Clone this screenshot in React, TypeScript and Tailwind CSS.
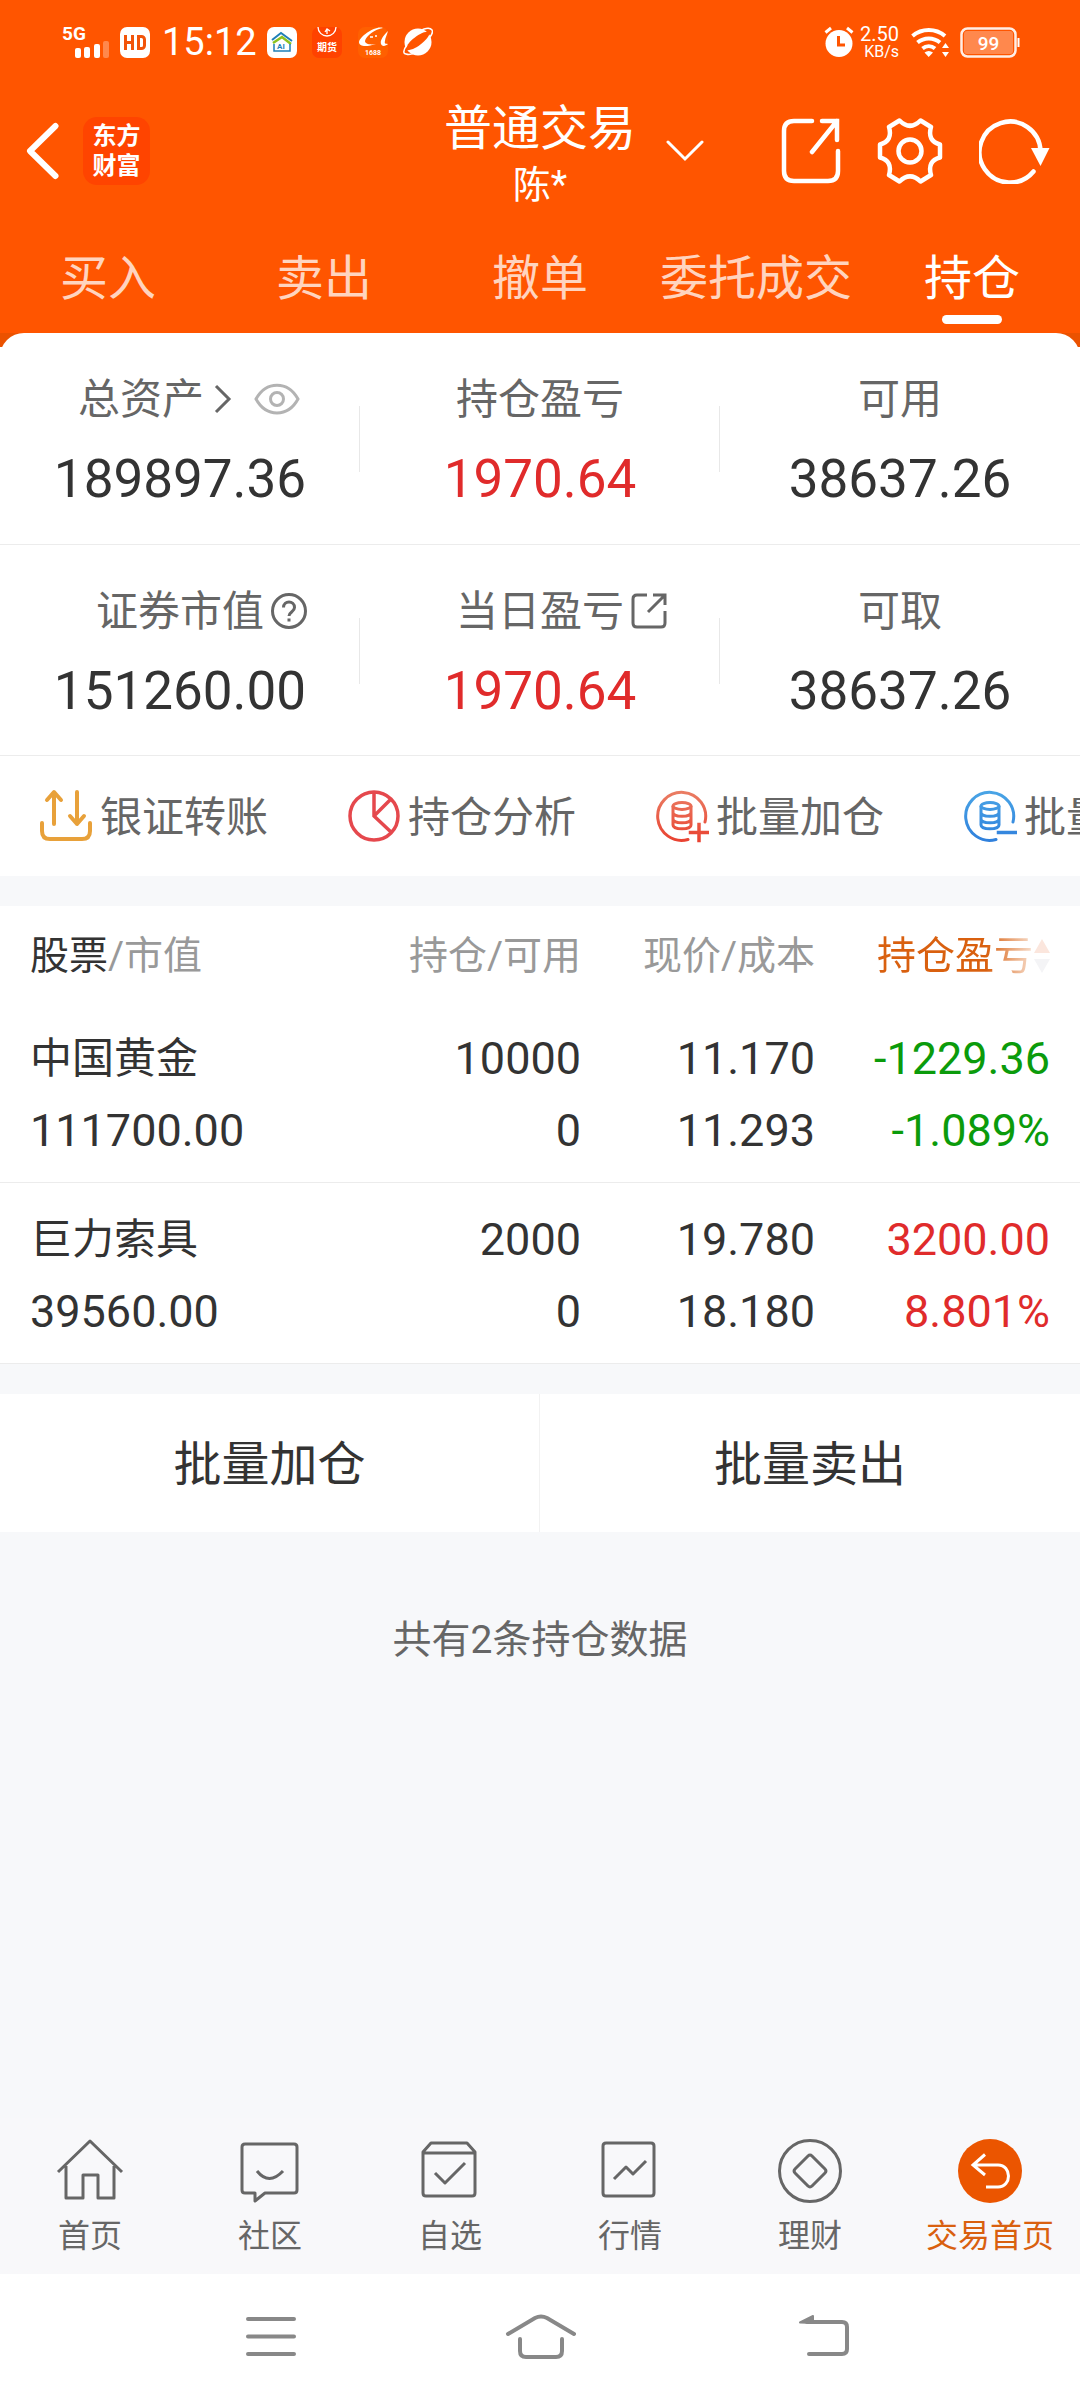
import type { ReactNode } from "react";

type Tone = "default" | "up" | "down";

const toneClass: Record<Tone, string> = {
    default: "text-[#333333]",
    up: "text-[#e02b2b]",
    down: "text-[#0b9b0b]",
};

const tabs = ["买入", "卖出", "撤单", "委托成交", "持仓"];

const holdings: {
    name: string;
    marketValue: string;
    amount: string;
    available: string;
    price: string;
    cost: string;
    profit: string;
    profitRate: string;
    tone: Tone;
}[] = [
    {
        name: "中国黄金",
        marketValue: "111700.00",
        amount: "10000",
        available: "0",
        price: "11.170",
        cost: "11.293",
        profit: "-1229.36",
        profitRate: "-1.089%",
        tone: "down",
    },
    {
        name: "巨力索具",
        marketValue: "39560.00",
        amount: "2000",
        available: "0",
        price: "19.780",
        cost: "18.180",
        profit: "3200.00",
        profitRate: "8.801%",
        tone: "up",
    },
];

export default function App() {
    return (
        <div className="flex min-h-screen flex-col bg-[#f7f8fa] font-['Roboto','Noto_Sans_CJK_SC',sans-serif] text-[#333333]">
            <header className="bg-[#ff5500] text-white">
                <StatusBar />
                <TitleBar />
                <Tabs />
            </header>
            <main className="flex-1">
                <Summary />
                <QuickActions />
                <Holdings />
                <div className="mt-[30px] grid h-[138px] grid-cols-2 divide-x divide-[#f2f2f2] bg-white text-5xl">
                    <button type="button" className="pt-1">批量加仓</button>
                    <button type="button" className="pt-1">批量卖出</button>
                </div>
                <p className="mt-20 text-center text-[39px] leading-[56px] text-[#666666]">共有2条持仓数据</p>
            </main>
            <BottomNav />
            <SystemNav />
        </div>
    );
}

function StatusBar() {
    return (
        <div className="flex h-[84px] items-center justify-between pr-[60px] pl-[62px]">
            <div className="flex items-center">
                <svg width="48" height="44" viewBox="0 0 48 44" fill="#fff">
                    <text x="0" y="20" fontSize="19" fontWeight="700" fontFamily="Roboto">5G</text>
                    <rect x="13" y="28" width="6" height="10" rx="2" />
                    <rect x="22" y="27" width="6" height="11" rx="2" />
                    <rect x="32" y="24" width="6" height="14" rx="2" />
                    <rect x="41" y="21" width="6" height="17" rx="2" opacity=".3" />
                </svg>
                <svg className="ml-[10px]" width="30" height="31" viewBox="0 0 30 31">
                    <rect width="30" height="31" rx="7" fill="#fff" />
                    <path d="M5.500 8v15M12.500 8v15M5.500 15.500h7M18.500 9.500h3a3 3 0 0 1 3 3v6a3 3 0 0 1-3 3h-3z" fill="none" stroke="#f2540a" strokeWidth="3" />
                </svg>
                <span className="ml-3 text-[38px] leading-[44px]">15:12</span>
                <svg className="ml-[10px]" width="30" height="31" viewBox="0 0 30 31">
                    <rect width="30" height="31" rx="7" fill="#fff" />
                    <path d="M5 13 14 6l11 8" fill="none" stroke="#1f7fb8" strokeWidth="2" />
                    <path d="m6 16 9-6 9 7" fill="none" stroke="#8dc21f" strokeWidth="2.500" />
                    <path d="M7 17v7h16v-7" fill="none" stroke="#1f7fb8" strokeWidth="1.500" />
                    <text x="10" y="22" fontSize="8" fontWeight="700" fontFamily="Roboto" fill="#1f7fb8">AI</text>
                </svg>
                <svg className="ml-[15px]" width="30" height="31" viewBox="0 0 30 31">
                    <rect width="30" height="31" rx="7" fill="#ff4200" />
                    <path d="M6 0a9 9 0 0 0 18 0M13 5l2-3 3 2M15 3v4" fill="none" stroke="#fff" strokeWidth="1.300" />
                    <text x="5" y="24" fontSize="10" fontWeight="700" fontFamily="Noto Sans CJK SC" fill="#fff">期货</text>
                </svg>
                <svg className="ml-4" width="30" height="31" viewBox="0 0 30 31">
                    <rect width="30" height="31" rx="7" fill="#ff6000" />
                    <path d="M25 1C18-2 2 9 1 15c0 5 8 5 17 2-6 1-11 0-11-3C8 9 17 2 25 1zM30 4c-6 6-8 10-7 13 1 3 5 2 7 0-2 0-4 0-3-3 0-3 2-6 3-10z" fill="#fff" />
                    <path d="M12 10h3M17 9h2" stroke="#fff" strokeWidth="1.500" />
                    <text x="7" y="28" fontSize="7" fontWeight="700" fontFamily="Roboto" fill="#fff">1688</text>
                </svg>
                <svg className="ml-[15px]" width="30" height="30" viewBox="0 0 30 30">
                    <circle cx="15" cy="15" r="13.500" fill="#fff" />
                    <path d="M3 23C1 18 18 3 26 5c3 5-15 20-23 18z" fill="#ff5500" />
                    <path d="M4 18C0 23 0 27 3 27c3 1 7 0 10-2M16 4c6-3 11-4 13-1 1 2 0 5-3 8" fill="none" stroke="#fff" strokeWidth="1.500" />
                </svg>
            </div>
            <div className="flex items-center">
                <svg width="30" height="32" viewBox="0 0 30 32">
                    <circle cx="15" cy="17.500" r="13.500" fill="#fff" />
                    <path d="M1.500 6.500 7 2M28.500 6.500 23 2" stroke="#fff" strokeWidth="3" />
                    <path d="M14.500 10v9H21" fill="none" stroke="#ff5500" strokeWidth="3" />
                </svg>
                <div className="ml-[6px] text-right">
                    <div className="text-xl leading-5">2.50</div>
                    <div className="text-base leading-4">KB/s</div>
                </div>
                <svg className="ml-3" width="38" height="31" viewBox="0 0 38 31">
                    <g fill="none" stroke="#fff" strokeWidth="4">
                        <path d="M1.500 9a25 25 0 0 1 32.500 0" />
                        <path d="M6.500 15.500a17.500 17.500 0 0 1 22.500 0" />
                        <path d="M11.500 21.500a10 10 0 0 1 12.500 0" />
                    </g>
                    <path d="M13.500 25.500a7 7 0 0 1 8.500 0L17.700 30zM34.500 16l3.500 5h-7zM34.500 30 31 25h7z" fill="#fff" />
                </svg>
                <svg className="ml-[11px]" width="60" height="31" viewBox="0 0 60 31">
                    <rect x="1.500" y="1.500" width="54" height="28" rx="6" fill="none" stroke="#fff" strokeOpacity=".9" strokeWidth="2.500" />
                    <rect x="4" y="4" width="49" height="23" rx="3" fill="#fff" opacity=".3" />
                    <path d="M58.500 11v9" stroke="#fff" strokeWidth="2" />
                    <text x="28.500" y="22.500" textAnchor="middle" fontSize="19" fontWeight="500" fontFamily="Roboto" fill="#fff">99</text>
                </svg>
            </div>
        </div>
    );
}

function TitleBar() {
    return (
        <div className="grid h-[134px] grid-cols-[1fr_auto_1fr] items-center px-[26px]">
            <div className="flex items-center gap-6">
                <button type="button" aria-label="返回">
                    <svg width="33" height="58" viewBox="0 0 33 58" fill="none" stroke="#fff" strokeWidth="6" strokeLinecap="round" strokeLinejoin="round">
                        <path d="M29.500 4 4 29l25.500 25" />
                    </svg>
                </button>
                <div className="flex h-[68px] w-[67px] items-center justify-center rounded-[14px] bg-[#ff4400] text-2xl leading-[30px] font-bold">
                    <span className="w-12">东方财富</span>
                </div>
            </div>
            <div className="flex flex-col items-center pt-2">
                <div className="relative">
                    <h1 className="text-5xl leading-[60px]">普通交易</h1>
                    <button type="button" aria-label="切换账户" className="absolute top-[41px] left-full ml-[30px]">
                        <svg width="38" height="22" viewBox="0 0 38 22" fill="none" stroke="#fff" strokeWidth="3" strokeLinecap="round">
                            <path d="m2 2 17 17L36 2" />
                        </svg>
                    </button>
                </div>
                <span className="text-[38px] leading-[52px]">陈*</span>
            </div>
            <div className="flex items-center justify-end gap-9">
                <button type="button" aria-label="分享">
                    <svg width="60" height="66" viewBox="0 0 60 66" fill="none" stroke="#fff" strokeWidth="4.500" strokeLinecap="round">
                        <path d="M31 3H13Q3 3 3 13v40q0 10 10 10h34q10 0 10-10V33" />
                        <path d="M41 3h15v19M56 3 31 34" />
                    </svg>
                </button>
                <button type="button" aria-label="设置">
                    <svg width="66" height="66" viewBox="0 0 66 66" fill="none" stroke="#fff" strokeWidth="4.500" strokeLinejoin="round">
                        <path d="M22.500 2.500Q33 13 43.500 2.500L54 9Q50 23 63 26.500v13Q50 43 54 57l-10.500 6.500Q33 53 22.500 63.500L12 57Q16 43 3 39.500v-13Q16 23 12 9z" />
                        <circle cx="33" cy="33" r="11.500" />
                    </svg>
                </button>
                <button type="button" aria-label="刷新">
                    <svg width="75" height="66" viewBox="0 0 75 66" fill="none" stroke="#fff" strokeWidth="4.500" strokeLinecap="round">
                        <path d="M54.500 53.500A30.500 30.500 0 1 1 61.500 33" />
                        <path d="M52 30h18.500L61.500 48z" fill="#fff" stroke="none" />
                    </svg>
                </button>
            </div>
        </div>
    );
}

function Tabs() {
    return (
        <nav className="grid h-[115px] grid-cols-5 text-5xl">
            {tabs.map((tab) => {
                const active = tab === "持仓";
                return (
                    <a
                        key={tab}
                        href="#"
                        className={`flex flex-col items-center pt-[29px] leading-[64px] whitespace-nowrap ${active ? "text-white" : "text-white/75"}`}
                    >
                        {tab}
                        {active && <span className="mt-1 h-[9px] w-[60px] rounded-full bg-white" />}
                    </a>
                );
            })}
        </nav>
    );
}

function Stat({ label, value, tone = "default", children }: { label: string; value: string; tone?: Tone; children?: ReactNode }) {
    return (
        <div className="relative flex flex-col items-center pt-[38px] after:absolute after:top-[73px] after:right-0 after:h-[66px] after:w-px after:bg-[#e8e8e8] last:after:hidden">
            <div className="flex h-14 items-center text-[42px] text-[#666666]">
                {label}
                {children}
            </div>
            <div className={`mt-5 text-[53px] leading-[64px] ${toneClass[tone]}`}>{value}</div>
        </div>
    );
}

function Summary() {
    return (
        <div className="bg-[linear-gradient(#eb5200_14px,#ffffff_14px)]">
            <section className="rounded-t-3xl bg-white">
                <div className="grid h-[212px] grid-cols-3 border-b border-[#ececec]">
                    <Stat label="总资产" value="189897.36">
                        <svg className="ml-2" width="20" height="32" viewBox="0 0 20 32" fill="none" stroke="#666" strokeWidth="3">
                            <path d="m4 3 13 13L4 29" />
                        </svg>
                        <button type="button" aria-label="隐藏资产" className="-mr-[18px] ml-[22px]">
                            <svg width="46" height="32" viewBox="0 0 46 32" fill="none" stroke="#b3b3b3" strokeWidth="3">
                                <path d="M2 16C12-2.500 34-2.500 44 16 34 34.500 12 34.500 2 16z" />
                                <circle cx="23" cy="16" r="6.500" />
                            </svg>
                        </button>
                    </Stat>
                    <Stat label="持仓盈亏" value="1970.64" tone="up" />
                    <Stat label="可用" value="38637.26" />
                </div>
                <div className="grid h-[211px] grid-cols-3 border-b border-[#ececec]">
                    <Stat label="证券市值" value="151260.00">
                        <button type="button" aria-label="说明" className="-mr-11 ml-[6px]">
                            <svg width="38" height="38" viewBox="0 0 38 38" fill="none" stroke="#666" strokeWidth="3">
                                <circle cx="19" cy="19" r="16.500" />
                                <path d="M13.500 15.500c0-7.500 11-7.500 11 0 0 4.500-5.500 4.500-5.500 8.500M19 26.500v3" />
                            </svg>
                        </button>
                    </Stat>
                    <Stat label="当日盈亏" value="1970.64" tone="up">
                        <button type="button" aria-label="盈亏详情" className="-mr-11 ml-[6px]">
                            <svg width="38" height="38" viewBox="0 0 38 38" fill="none" stroke="#666" strokeWidth="3">
                                <path d="M17 3H7Q3 3 3 7v24q0 4 4 4h24q4 0 4-4V19M23 3h12v10M35 3 18 20" />
                            </svg>
                        </button>
                    </Stat>
                    <Stat label="可取" value="38637.26" />
                </div>
            </section>
        </div>
    );
}

function QuickActions() {
    const actions = [
        { label: "银证转账", icon: <TransferIcon /> },
        { label: "持仓分析", icon: <PieIcon /> },
        { label: "批量加仓", icon: <CoinsIcon id="coins-add" from="#ea8066" to="#e9402f" plus /> },
        { label: "批量卖出", icon: <CoinsIcon id="coins-sell" from="#4aa6e6" to="#2f7fdc" /> },
    ];

    return (
        <div className="flex h-[120px] gap-[79px] overflow-hidden bg-white pl-[39px]">
            {actions.map((action) => (
                <button
                    key={action.label}
                    type="button"
                    className="flex shrink-0 items-center gap-[7px] text-[42px] whitespace-nowrap text-[#666666]"
                >
                    {action.icon}
                    <span className="pt-[3px]">{action.label}</span>
                </button>
            ))}
        </div>
    );
}

function TransferIcon() {
    return (
        <svg width="54" height="54" viewBox="0 0 54 54" fill="none" stroke="#e8a13a" strokeWidth="4" strokeLinecap="round" strokeLinejoin="round">
            <path d="M15 35V4M8 11l7-8 7 8M38 3v32M31 27l7 8 7-8" />
            <path d="M3 34v8q0 8 8 8h32q8 0 8-8v-8" />
        </svg>
    );
}

function PieIcon() {
    return (
        <svg width="54" height="54" viewBox="0 0 54 54" fill="none" stroke="#e5484d" strokeWidth="3.500">
            <circle cx="27" cy="27" r="24" />
            <path d="M27 3v24l17 16M27 27 44 10" />
        </svg>
    );
}

function CoinsIcon({ id, from, to, plus }: { id: string; from: string; to: string; plus?: boolean }) {
    return (
        <svg width="54" height="54" viewBox="0 0 54 54" fill="none" stroke={`url(#${id})`} strokeWidth="3">
            <defs>
                <linearGradient id={id} gradientUnits="userSpaceOnUse" x1="0" y1="0" x2="0" y2="54">
                    <stop stopColor={from} />
                    <stop offset="1" stopColor={to} />
                </linearGradient>
            </defs>
            <path d="M33 50.500A24 24 0 1 1 50 33" strokeLinecap="round" />
            <ellipse cx="27" cy="17" rx="9" ry="3.500" />
            <path d="M18 17v19c0 5 18 5 18 0V17M18 23.500c0 5 18 5 18 0M18 30c0 5 18 5 18 0" />
            <path d="M35 43h18v1H35z" strokeWidth="2.500" />
            {plus && <path d="M43.500 35h1v17h-1z" strokeWidth="2.500" />}
        </svg>
    );
}

function Holdings() {
    return (
        <table className="mt-[30px] w-full table-fixed bg-white text-right">
            <colgroup>
                <col />
                <col className="w-[235px]" />
                <col className="w-[234px]" />
                <col className="w-[265px]" />
            </colgroup>
            <thead className="text-[39px] text-[#999999]">
                <tr className="h-[96px]">
                    <th className="pt-1 pl-[30px] text-left font-normal">
                        <span className="text-[#333333]">股票</span>/市值
                    </th>
                    <th className="pt-1 font-normal">持仓/可用</th>
                    <th className="pt-1 font-normal">现价/成本</th>
                    <th className="pt-1 pr-[30px] font-normal">
                        <button type="button" className="inline-flex items-center text-[#d9600f]">
                            <span className="bg-linear-to-r from-[#d9600f] from-70% to-[#d9600f]/20 bg-clip-text text-transparent">持仓盈亏</span>
                            <svg width="17" height="36" viewBox="0 0 17 36">
                                <path d="M9 1l8 14H1z" fill="#fbe6dd" />
                                <path d="M9 35l8-14H1z" fill="#f4f4f6" />
                            </svg>
                        </button>
                    </th>
                </tr>
            </thead>
            <tbody className="text-[45px] leading-[72px]">
                {holdings.map((item) => (
                    <tr key={item.name} className="border-b border-[#ececec]">
                        <td className="pt-[21px] pb-[15px] pl-[30px] text-left">
                            <div className="text-[42px]">{item.name}</div>
                            <div>{item.marketValue}</div>
                        </td>
                        <td className="pt-[21px] pb-[15px]">
                            <div>{item.amount}</div>
                            <div>{item.available}</div>
                        </td>
                        <td className="pt-[21px] pb-[15px]">
                            <div>{item.price}</div>
                            <div>{item.cost}</div>
                        </td>
                        <td className={`pt-[21px] pr-[30px] pb-[15px] ${toneClass[item.tone]}`}>
                            <div>{item.profit}</div>
                            <div>{item.profitRate}</div>
                        </td>
                    </tr>
                ))}
            </tbody>
        </table>
    );
}

function BottomNav() {
    const items = [
        {
            label: "首页",
            icon: <path d="m2 34 32-31 32 31M10 28v32h17V37h15v23h16V28" />,
        },
        {
            label: "社区",
            icon: (
                <path d="M9 6h49q3 0 3 3v43q0 3-3 3H29l-10 8v-8H9q-3 0-3-3V9q0-3 3-3M21 33q12 15 26 0" />
            ),
        },
        {
            label: "自选",
            icon: (
                <path d="M7 14v41q0 3 3 3h46q3 0 3-3V14l-8-9H15zM7 15h52M19 35l10 10 20-20" />
            ),
        },
        {
            label: "行情",
            icon: (
                <path d="M10 5h45q3 0 3 3v47q0 3-3 3H10q-3 0-3-3V8q0-3 3-3zM18 41l12-12 7 7 13-13" />
            ),
        },
        {
            label: "理财",
            icon: (
                <>
                    <circle cx="34" cy="33" r="30.500" />
                    <path d="m32 18-13 13q-2 2 0 4l13 13q2 2 4 0l13-13q2-2 0-4L36 18q-2-2-4 0z" />
                </>
            ),
        },
    ];

    return (
        <nav className="grid h-[156px] grid-cols-6 bg-[#f8f8fa] text-[32px] leading-10 text-[#666666]">
            {items.map((item) => (
                <a key={item.label} href="#" className="flex flex-col items-center pt-5">
                    <svg width="68" height="66" viewBox="0 0 68 66" fill="none" stroke="#666" strokeWidth="3" strokeLinejoin="round">
                        {item.icon}
                    </svg>
                    <span className="mt-3">{item.label}</span>
                </a>
            ))}
            <a href="#" className="flex flex-col items-center pt-5 text-[#d9600f]">
                <svg width="68" height="66" viewBox="0 0 68 66" fill="none" stroke="#fff" strokeWidth="3">
                    <circle cx="34" cy="33" r="32" fill="#eb5500" stroke="none" />
                    <path d="M29 16.500 17 27l12 10M17 27h25c14 0 14 22 0 22H30" />
                </svg>
                <span className="mt-3">交易首页</span>
            </a>
        </nav>
    );
}

function SystemNav() {
    return (
        <div className="flex h-[126px] items-center justify-center gap-[205px] bg-white">
            <button type="button" aria-label="最近任务">
                <svg width="70" height="46" viewBox="0 0 70 46" fill="none" stroke="#888" strokeWidth="4" strokeLinecap="round">
                    <path d="M19 5h46M19 22.500h46M19 40h46" />
                </svg>
            </button>
            <button type="button" aria-label="主屏幕">
                <svg width="72" height="46" viewBox="0 0 72 46" fill="none" stroke="#888" strokeWidth="4" strokeLinecap="round">
                    <path d="M4 20 31 4q6-3 12 0l27 16M16 25v12q0 6 6 6h30q6 0 6-6V25" />
                </svg>
            </button>
            <button type="button" aria-label="返回上一页">
                <svg width="70" height="46" viewBox="0 0 70 46" fill="none" stroke="#888" strokeWidth="4" strokeLinecap="round">
                    <path d="M26 8h35q5 0 5 5v22q0 5-5 5H28" />
                    <path d="M19 8.500 32 2v7z" fill="#888" strokeWidth="2" strokeLinejoin="round" />
                </svg>
            </button>
        </div>
    );
}
